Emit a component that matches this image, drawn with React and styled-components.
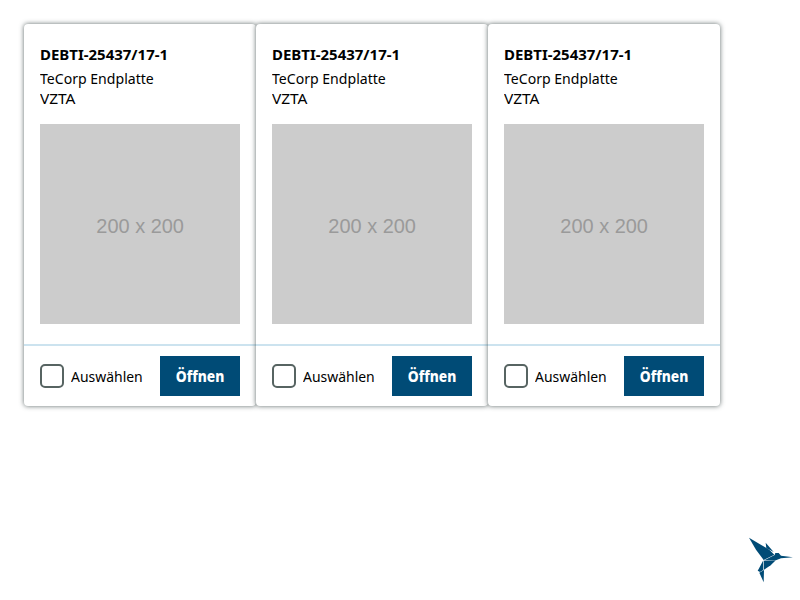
import React from "react";
import styled, { createGlobalStyle } from "styled-components";

const GlobalStyle = createGlobalStyle`
  *, *::before, *::after { box-sizing: border-box; }
  body {
    margin: 0;
    background: #fff;
    color: #000;
    font-family: "Noto Sans", sans-serif;
    font-size: 15px;
  }
`;

const Page = styled.main`
  height: 600px;
  padding: 24px;
  overflow: hidden;
`;

const CardList = styled.div`
  display: flex;
  align-items: flex-start;
`;

const Card = styled.article`
  width: 232px;
  height: 382px;
  display: flex;
  flex-direction: column;
  border-radius: 4px;
  background: #fff;
  box-shadow: 0 0 5px rgba(43, 58, 58, 0.75);
`;

const CardBody = styled.div`
  flex: 1;
  padding: 20px 16px 0;
`;

const Condensed = styled.span`
  display: block;
  white-space: nowrap;
  transform: scaleX(${(p) => p.$scale});
  transform-origin: ${(p) => p.$origin || "left"} center;
`;

const Title = styled.h2`
  margin: 0 0 4px;
  font-size: 15px;
  font-weight: 700;
  line-height: 20px;
`;

const Description = styled.p`
  margin: 0;
  line-height: 20px;
`;

const Placeholder = styled.div`
  width: 200px;
  height: 200px;
  margin-top: 16px;
  padding-top: 4px;
  display: flex;
  align-items: center;
  justify-content: center;
  background: #ccc;
  color: #9a9a9a;
  font: 21px "Liberation Sans", Arial, sans-serif;
`;

const CardFooter = styled.footer`
  height: 62px;
  padding: 10px 16px;
  display: flex;
  align-items: center;
  justify-content: space-between;
  border-top: 2px solid #cce3ef;
`;

const CheckLabel = styled.label`
  display: flex;
  align-items: center;
  gap: 6.5px;
  width: 112px;
  line-height: 20px;
`;

const Checkbox = styled.input`
  appearance: none;
  flex: none;
  width: 24px;
  height: 24px;
  margin: 0;
  border: 2px solid #576462;
  border-radius: 5px;
  background: #fff;
`;

const OpenButton = styled.button`
  width: 80px;
  height: 40px;
  padding: 0;
  flex: none;
  border: 0;
  background: #004b76;
  color: #fff;
  font: 800 15px/20px "Noto Sans", sans-serif;
`;

const Logo = styled.svg`
  position: fixed;
  right: 0;
  bottom: 10px;
  width: 60px;
  height: 60px;
`;

const items = [1, 2, 3].map((id) => ({
  id,
  number: "DEBTI-25437/17-1",
  name: "TeCorp Endplatte",
  kind: "VZTA",
}));

function ResultCard({ item }) {
  return (
    <Card>
      <CardBody>
        <Title><Condensed $scale={0.998}>{item.number}</Condensed></Title>
        <Description><Condensed $scale={0.938}>{item.name}</Condensed></Description>
        <Description><Condensed $scale={1.03}>{item.kind}</Condensed></Description>
        <Placeholder>
          <Condensed $scale={0.95} $origin="center">200 x 200</Condensed>
        </Placeholder>
      </CardBody>
      <CardFooter>
        <CheckLabel>
          <Checkbox type="checkbox" />
          <Condensed $scale={0.93}>Auswählen</Condensed>
        </CheckLabel>
        <OpenButton>
          <Condensed $scale={0.92} $origin="center">Öffnen</Condensed>
        </OpenButton>
      </CardFooter>
    </Card>
  );
}

function Hummingbird() {
  return (
    <Logo viewBox="0 0 180 180" fill="#004b76" aria-label="Kolibri">
      <path d="M27 23 L88 59 L103 74 L71 90 L48 59 Z" />
      <path d="M77 38 L101 66 L90 60 L79 55 Z" />
      <path d="M73 91 L104 75 L106 69 L116 69 L123 77 L159 82 L123 85 L104 92 Z" />
      <path d="M72 92 L105 93 L92 106 L72 119 Z" />
      <path d="M70 91 L70 120 L60 126 L53 122 L56 117 Z" />
      <path d="M58 128 L72 120 L71 157 Z" />
    </Logo>
  );
}

export default function App() {
  return (
    <>
      <GlobalStyle />
      <Page>
        <CardList>
          {items.map((item) => <ResultCard key={item.id} item={item} />)}
        </CardList>
      </Page>
      <Hummingbird />
    </>
  );
}
